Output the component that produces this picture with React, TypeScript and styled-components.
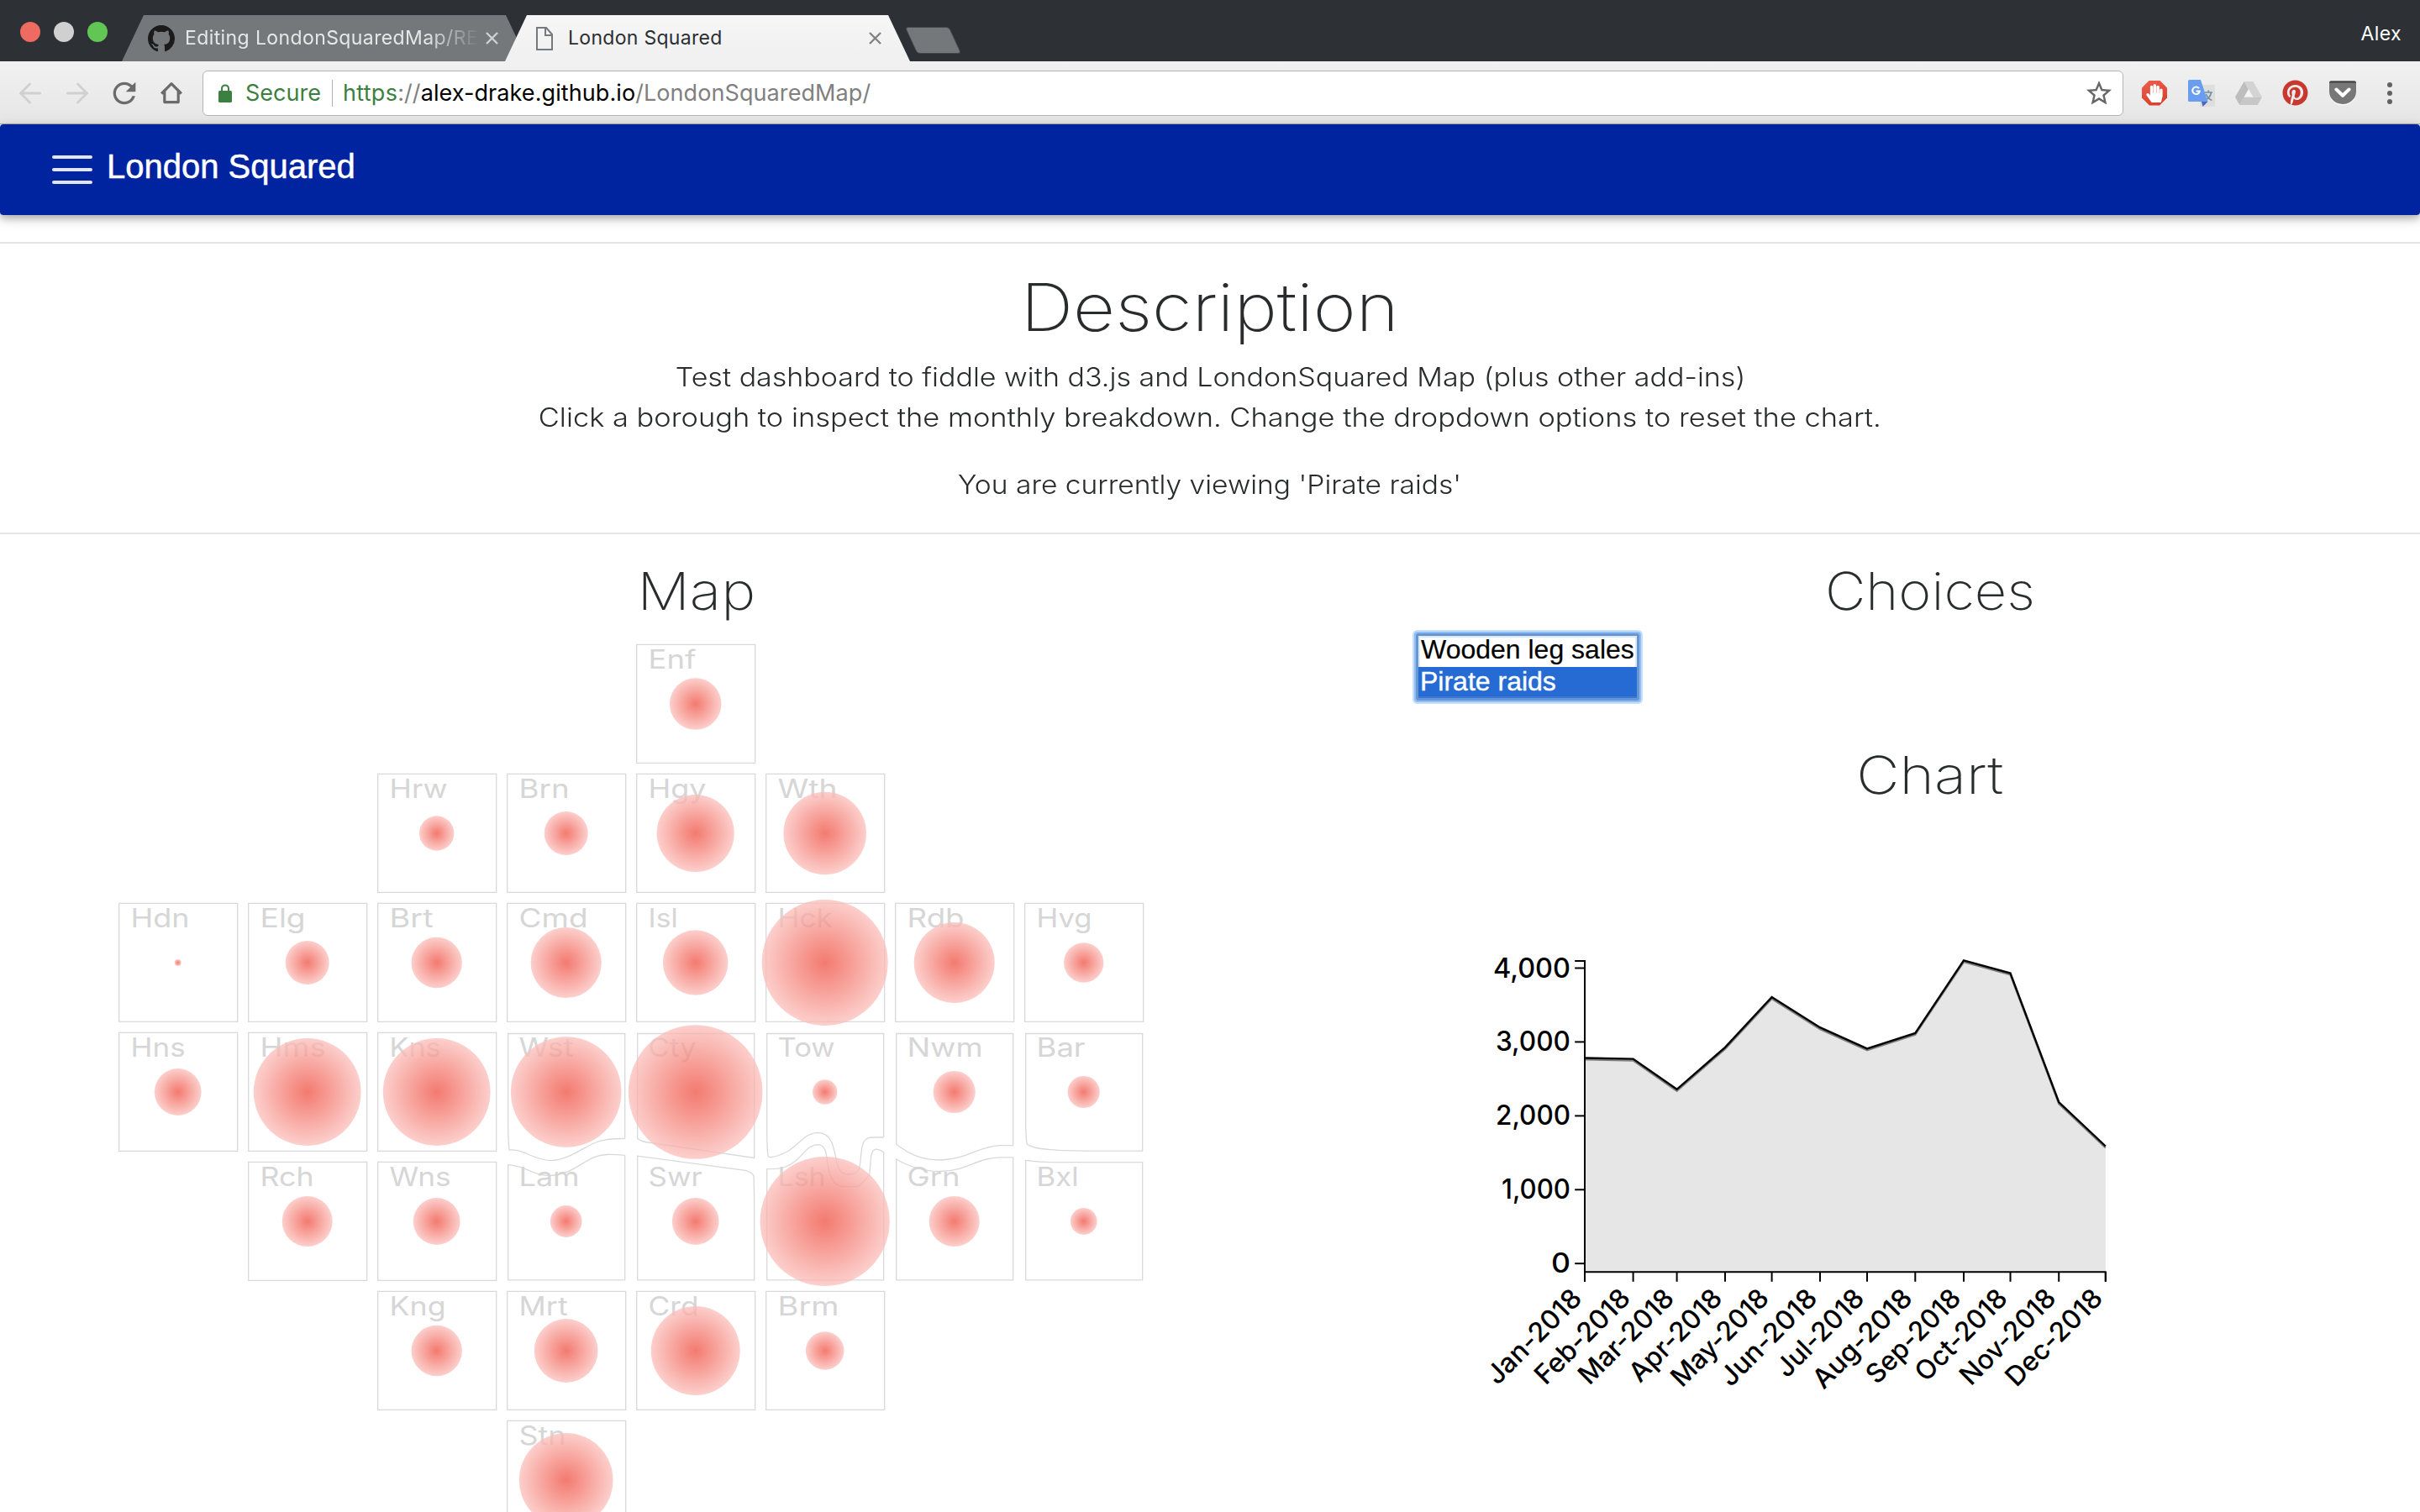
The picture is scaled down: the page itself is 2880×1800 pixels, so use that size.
import React from "react";
import styled, { createGlobalStyle } from "styled-components";
import { FaPinterest, FaHandPaper } from "react-icons/fa";
import { MdRefresh, MdStarBorder } from "react-icons/md";

const GlobalStyle = createGlobalStyle`
  * { box-sizing: border-box; }
  html, body { margin: 0; padding: 0; }
  body { background: #fff; font-family: Inter, "Open Sans", sans-serif; color: #292b2c; }
  svg { display: block; flex: none; }
`;

const Screen = styled.div`
  width: 2880px;
  height: 1800px;
  overflow: hidden;
  display: flex;
  flex-direction: column;
`;

/* ---------- browser window ---------- */

const TabStrip = styled.div`
  flex: none;
  height: 73px;
  padding-left: 24px;
  background: #2d3135;
  display: flex;
  align-items: flex-end;
`;

const Lights = styled.div`
  display: flex;
  gap: 16px;
  margin: 0 17px 23px 0;
`;

const Light = styled.span<{ $color: string }>`
  width: 24px;
  height: 24px;
  border-radius: 50%;
  background: ${(p) => p.$color};
`;

const Tab = styled.div<{ $active?: boolean }>`
  width: ${(p) => (p.$active ? "482px" : "483px")};
  height: 55px;
  margin-left: ${(p) => (p.$active ? "-27px" : "0")};
  padding: ${(p) => (p.$active ? "0 34px 0 37px" : "0 35px 0 31px")};
  display: flex;
  align-items: center;
  clip-path: polygon(26px 0, calc(100% - 26px) 0, 100% 100%, 0 100%);
  background: ${(p) => (p.$active ? "linear-gradient(#f6f6f6, #f0f0f0)" : "#74787b")};
  color: ${(p) => (p.$active ? "#2b2e31" : "#e6e7e7")};
`;

const TabTitle = styled.span<{ $fade?: boolean }>`
  flex: 1;
  margin-left: ${(p) => (p.$fade ? "12px" : "18px")};
  white-space: nowrap;
  font-size: 23px;
  line-height: 55px;
  letter-spacing: ${(p) => (p.$fade ? "0.4px" : "0.3px")};
  ${(p) => p.$fade && "mask-image: linear-gradient(90deg, #000 80%, transparent 98%);"}
`;

const NewTab = styled.div`
  width: 51px;
  height: 30px;
  margin: 0 0 10px 2px;
  border-radius: 3px;
  background: #74787b;
  box-shadow: 0 0 0 1px #44484b;
  transform: skewX(24.8deg);
`;

const Profile = styled.span`
  margin: 0 22px 0 auto;
  padding-bottom: 17px;
  font-size: 23px;
  line-height: 31px;
  letter-spacing: 0.4px;
  color: #fff;
`;

const Toolbar = styled.div`
  flex: none;
  height: 75px;
  padding: 1px 33px 0 23px;
  display: flex;
  align-items: center;
  background: linear-gradient(#f1f1f1, #e6e6e6);
  border-bottom: 1px solid #a9a9a9;
`;

const NavButtons = styled.div`
  display: flex;
  align-items: center;
  gap: 30px;
  margin-right: 24px;
`;

const Omnibox = styled.div`
  flex: 1;
  height: 54px;
  padding: 0 10px 0 18px;
  display: flex;
  align-items: center;
  background: #fff;
  border: 1px solid #b4b4b4;
  border-radius: 6px;
  font-size: 27px;
  line-height: 52px;
`;

const Secure = styled.span`
  margin-left: 16px;
  padding-right: 13px;
  color: #3b7f41;
`;

const Divider = styled.span`
  width: 1px;
  height: 32px;
  background: #b0b0b0;
  margin-right: 12px;
`;

const Url = styled.span`
  flex: 1;
  white-space: nowrap;
  color: #808080;
  letter-spacing: 0.08px;
  b { font-weight: 400; color: #000; }
  i { font-style: normal; color: #3b7f41; letter-spacing: 0.3px; }
`;

const Extensions = styled.div`
  display: flex;
  align-items: center;
  gap: 24px;
  margin-left: 22px;
  color: #c8382f;
`;

const MenuDots = styled.div`
  display: flex;
  flex-direction: column;
  gap: 4px;
  margin-left: 37px;
`;

const Dot = styled.span`
  width: 6px;
  height: 6px;
  border-radius: 50%;
  background: #626262;
`;

const BlockBadge = styled.span`
  width: 30px;
  height: 30px;
  margin-right: 1px;
  display: flex;
  align-items: center;
  justify-content: center;
  color: #fff;
  background: linear-gradient(160deg, #ee5f4c, #d63a28);
  clip-path: polygon(30% 0, 70% 0, 100% 30%, 100% 70%, 70% 100%, 30% 100%, 0 70%, 0 30%);
`;

/* ---------- page ---------- */

const NavBar = styled.header`
  flex: none;
  height: 108px;
  padding: 0 62px 8px;
  display: flex;
  align-items: center;
  gap: 17px;
  background: #0023a0;
  border-radius: 4px;
  box-shadow: 0 4px 10px 0 rgba(0, 0, 0, 0.28), 0 4px 20px 0 rgba(0, 0, 0, 0.1);
  color: #fff;
  font: 400 40px/50px "Liberation Sans", Arial, sans-serif;
  -webkit-text-stroke: 0.5px #fff;
`;

const Burger = styled.div`
  width: 48px;
  padding-top: 8px;
  display: flex;
  flex-direction: column;
  gap: 11px;
`;

const BurgerLine = styled.span`
  height: 4px;
  border-radius: 2px;
  background: #e1e5f4;
`;

const Intro = styled.section`
  flex: none;
  margin-top: 32px;
  height: 348px;
  padding-top: 28px;
  border-top: 2px solid #e5e5e5;
  border-bottom: 2px solid #e5e5e5;
  display: flex;
  flex-direction: column;
  align-items: center;
`;

const Heading = styled.h1<{ $stretch: number }>`
  margin: 0 0 11px;
  font-weight: 230;
  font-size: 78px;
  line-height: 96px;
  transform: scaleX(${(p) => p.$stretch});
`;

const Subheading = styled.h2<{ $stretch: number }>`
  margin: 0;
  padding-right: 2px;
  text-align: center;
  font-weight: 230;
  font-size: 62px;
  line-height: 77px;
  transform: scaleX(${(p) => p.$stretch});
`;

const Copy = styled.p<{ $stretch: number; $gap?: boolean }>`
  margin: ${(p) => (p.$gap ? "32px" : "0")} 0 0;
  font-weight: 300;
  font-size: 31px;
  line-height: 48px;
  white-space: nowrap;
  transform: scaleX(${(p) => p.$stretch});
`;

const Dashboard = styled.main`
  display: grid;
  grid-template-columns: 1660px 1226px;
  column-gap: 25px;
  padding-top: 29px;
`;

const Column = styled.section`
  display: flex;
  flex-direction: column;
`;

const ListBox = styled.div`
  width: 266px;
  margin: 12px 0 50px;
  border: 3px solid #6797d3;
  border-radius: 2px;
  box-shadow: 0 0 0 2px #8fbdf6, 0 0 0 4px #c8dffb;
  font: 400 32px/32px "Liberation Sans", Arial, sans-serif;
`;

const Option = styled.div<{ $selected?: boolean }>`
  padding: ${(p) => (p.$selected ? "1px 0 4px 2px" : "0 0 5px 3px")};
  white-space: nowrap;
  color: ${(p) => (p.$selected ? "#fff" : "#000")};
  background: ${(p) => (p.$selected ? "#266bd3" : "#fff")};
  box-shadow: ${(p) =>
    p.$selected ? "inset 0 -2px 0 #3a78d6" : "inset 2px 2px 0 #dbe9fb, inset -2px 0 0 #dbe9fb"};
  -webkit-text-stroke: ${(p) => (p.$selected ? "0.4px #fff" : "0.2px #000")};
`;

const Cell = styled.path`
  fill: none;
  stroke: #d9d9d9;
  stroke-width: 1.3;
`;

const CellLabel = styled.text`
  fill: #d6d6d6;
  font: 400 31px Inter, sans-serif;
`;

const AxisText = styled.text`
  fill: #000;
  font: 460 32px Inter, sans-serif;
`;

const Axis = styled.path`
  fill: none;
  stroke: #000;
  stroke-width: 2;
`;

/* label, column, row, bubble radius, label width */
type Borough = [string, number, number, number, number];

const boroughs: Borough[] = [
  ["Enf", 4, 0, 30.8, 53],
  ["Hrw", 2, 1, 20.7, 65],
  ["Brn", 3, 1, 26, 56],
  ["Hgy", 4, 1, 46.1, 65],
  ["Wth", 5, 1, 49.3, 67],
  ["Hdn", 0, 2, 4, 66],
  ["Elg", 1, 2, 26, 50],
  ["Brt", 2, 2, 30.2, 48],
  ["Cmd", 3, 2, 42.1, 78],
  ["Isl", 4, 2, 38.8, 31],
  ["Hck", 5, 2, 75, 61],
  ["Rdb", 6, 2, 48, 64],
  ["Hvg", 7, 2, 23.7, 62],
  ["Hns", 0, 3, 27.9, 61],
  ["Hms", 1, 3, 63.9, 74],
  ["Kns", 2, 3, 63.9, 57],
  ["Wst", 3, 3, 65.8, 61],
  ["Cty", 4, 3, 79.8, 53],
  ["Tow", 5, 3, 14.7, 64],
  ["Nwm", 6, 3, 25.1, 86],
  ["Bar", 7, 3, 19.1, 54],
  ["Rch", 1, 4, 30, 60],
  ["Wns", 2, 4, 27.9, 69],
  ["Lam", 3, 4, 18.9, 68],
  ["Swr", 4, 4, 27.9, 60],
  ["Lsh", 5, 4, 77.1, 53],
  ["Grn", 6, 4, 30, 59],
  ["Bxl", 7, 4, 15.9, 46],
  ["Kng", 2, 5, 30.2, 63],
  ["Mrt", 3, 5, 37.9, 54],
  ["Crd", 4, 5, 53, 56],
  ["Brm", 5, 5, 22.8, 69],
  ["Stn", 3, 6, 55.9, 52],
];

/* cells whose edge follows the river */
const riverside: Record<string, string> = {
  Wst: "M743.7 1355.3V1230.5H604.7V1340Q604.9 1360 606 1369C622 1367 636 1381.5 655.5 1381.7C676 1381 694 1366 708 1360.5C718 1356 728 1356 743.7 1355.3",
  Cty: "M758.7 1356V1230.5H897.7V1378.5L768 1359.5Q763 1358.5 758.7 1355.5",
  Tow: "M1051.7 1354V1230.5H912.7V1350Q913 1370 914 1376Q914.5 1378 918 1377.6C950 1372 953 1348.3 974 1348.3C989 1349 992 1364 995 1380C998 1394 1001 1398 1011 1398C1021 1398 1023.5 1393 1024.5 1377C1026 1358 1029 1354 1039 1354H1051.7",
  Nwm: "M1205.7 1363.7V1230.5H1066.7V1362.3C1083 1375 1098 1381 1119 1381C1150 1380 1164 1365 1190 1363.7Z",
  Bar: "M1359.7 1370V1230.5H1220.7V1340Q1221 1354 1222 1361.5C1228 1369 1262 1370 1305 1370.2Z",
  Lam: "M743.7 1375.3V1523.8H604.7V1386.7C628 1388 632 1399.3 655 1399.5C686 1398 698 1374.7 722 1374.5Q734 1374.3 743.7 1375.3",
  Swr: "M758.7 1523.8V1376.2L887 1393.4Q896 1396 897 1400Q897.7 1420 897.7 1440V1523.8Z",
  Lsh: "M912.7 1523.8V1391.7Q928 1391.6 934 1389.5C956 1381 957 1362.7 974 1362.7C982 1363.5 983.5 1372 985 1385C987 1402 993 1412.5 1004 1412.7H1018C1026 1412 1030 1403 1034.5 1399C1036 1392 1035.5 1383 1037 1375Q1039 1367.5 1043.5 1368.2Q1048 1369 1051.7 1371.7V1523.8Z",
  Grn: "M1066.7 1523.8V1380C1082 1389 1098 1394.5 1119 1394.5C1150 1394 1164 1378 1190 1377.8H1205.7V1523.8Z",
  Bxl: "M1220.7 1523.8V1381.3Q1236 1383.6 1262 1383.6H1359.7V1523.8Z",
};

const PITCH = 154;

const BoroughMap = () => (
  <svg width="1660" height="1059" viewBox="0 742 1660 1059">
    <defs>
      <radialGradient id="bubble">
        <stop offset="0" stopColor="#ef4e40" />
        <stop offset="1" stopColor="#fbbfbb" />
      </radialGradient>
    </defs>
    {boroughs.map(([name, col, row, , width]) => (
      <g key={name}>
        <Cell d={riverside[name] ?? `M${141.7 + PITCH * col} ${767.4 + PITCH * row}h141v141h-141z`} />
        <CellLabel x={155.6 + PITCH * col} y={796 + PITCH * row} textLength={width + 4} lengthAdjust="spacingAndGlyphs">
          {name}
        </CellLabel>
      </g>
    ))}
    {boroughs.map(([name, col, row, r]) => (
      <circle key={name} cx={211.7 + PITCH * col} cy={838 + PITCH * row} r={r} fill="url(#bubble)" opacity="0.75" />
    ))}
  </svg>
);

/* label, axis x, line y, label length */
const months: [string, number, number, number][] = [
  ["Jan-2018", 1886, 1259.5, 145],
  ["Feb-2018", 1943.6, 1260.6, 145],
  ["Mar-2018", 1995.6, 1296.8, 145],
  ["Apr-2018", 2053, 1246.9, 141],
  ["May-2018", 2108.6, 1187, 149],
  ["Jun-2018", 2166, 1223.2, 148],
  ["Jul-2018", 2222, 1248.4, 133],
  ["Aug-2018", 2279.3, 1229.9, 152],
  ["Sep-2018", 2337, 1143.3, 144],
  ["Oct-2018", 2392.5, 1158.5, 140],
  ["Nov-2018", 2450.2, 1312, 146],
  ["Dec-2018", 2505.8, 1364.5, 148],
];

/* label, tick y, label length */
const levels: [string, number, number][] = [
  ["4,000", 1152.5, 92],
  ["3,000", 1240.4, 89],
  ["2,000", 1328.4, 89],
  ["1,000", 1416.3, 82],
  ["0", 1504.2, 23],
];

const points = months.map(([, x, y]) => `${x},${y}`).join(" ");

const AreaChart = () => (
  <svg width="1226" height="839" viewBox="1685 961 1226 839">
    <polygon points={`1886,1514 ${points} 2505.8,1514`} fill="#e6e6e6" />
    <polyline points={points} transform="translate(0 2)" fill="none" stroke="#808080" strokeWidth="2.2" />
    <polyline points={points} fill="none" stroke="#000" strokeWidth="2.4" />
    <Axis d="M1874.2 1144H1886V1514.3" />
    <Axis d="M1886 1525.8V1514.3H2505.8V1525.8" />
    {levels.map(([label, y, length]) => (
      <g key={label}>
        <Axis d={`M1874.2 ${y}H1886`} />
        <AxisText x="1869" y={y + 11} textAnchor="end" textLength={length} lengthAdjust="spacingAndGlyphs">
          {label}
        </AxisText>
      </g>
    ))}
    {months.map(([label, x, , length]) => (
      <g key={label}>
        <Axis d={`M${x} 1514.3V1525.8`} />
        <AxisText
          transform={`translate(${x - 1.5} 1547.5) rotate(-45)`}
          textAnchor="end"
          textLength={length}
          lengthAdjust="spacingAndGlyphs"
        >
          {label}
        </AxisText>
      </g>
    ))}
  </svg>
);

const CloseIcon = ({ color }: { color: string }) => (
  <svg width="15" height="15" viewBox="0 0 15 15" fill="none" stroke={color} strokeWidth="2.4">
    <path d="M1 1l13 13M14 1L1 14" />
  </svg>
);

const OctocatIcon = () => (
  <svg width="32" height="32" viewBox="0 0 16 16" fill="#1b1b1c">
    <path d="M8 0C3.58 0 0 3.58 0 8c0 3.54 2.29 6.53 5.47 7.59.4.07.55-.17.55-.38 0-.19-.01-.82-.01-1.49-2.01.37-2.53-.49-2.69-.94-.09-.23-.48-.94-.82-1.13-.28-.15-.68-.52-.01-.53.63-.01 1.08.58 1.23.82.72 1.21 1.87.87 2.33.66.07-.52.28-.87.51-1.07-1.78-.2-3.64-.89-3.64-3.95 0-.87.31-1.59.82-2.15-.08-.2-.36-1.02.08-2.12 0 0 .67-.21 2.2.82.64-.18 1.32-.27 2-.27.68 0 1.36.09 2 .27 1.53-1.04 2.2-.82 2.2-.82.44 1.1.16 1.92.08 2.12.51.56.82 1.27.82 2.15 0 3.07-1.87 3.75-3.65 3.95.29.25.54.73.54 1.48 0 1.07-.01 1.93-.01 2.2 0 .21.15.46.55.38A8.01 8.01 0 0 0 16 8c0-4.42-3.58-8-8-8z" />
  </svg>
);

const PageIcon = () => (
  <svg width="20" height="28" viewBox="0 0 20 28" fill="none" stroke="#75797c" strokeWidth="2">
    <path d="M1 1h11l7 8v18H1zM11 1v9h8" />
  </svg>
);

const ArrowIcon = ({ flip }: { flip?: boolean }) => (
  <svg width="26" height="26" viewBox="0 0 26 26" fill="none" stroke="#d0d0d0" strokeWidth="2.8" strokeLinecap="round">
    <path d={flip ? "M1 13h23M13.5 2L24.5 13l-11 11" : "M25 13H2M12.5 2L1.5 13l11 11"} />
  </svg>
);

const HomeIcon = () => (
  <svg width="26" height="27" viewBox="0 0 26 27" fill="none" stroke="#6b6b6b" strokeWidth="3.2">
    <path d="M1.2 14.5L13 2.6l11.8 11.9M4.8 12v12.6h16.4V12" strokeLinejoin="round" />
  </svg>
);

const ReloadIcon = styled(MdRefresh)`
  width: 40px;
  height: 40px;
  margin: 0 -7px;
  color: #6b6b6b;
`;

const StarIcon = styled(MdStarBorder)`
  width: 36px;
  height: 36px;
  color: #666;
`;

const PinterestIcon = styled(FaPinterest)`
  width: 31px;
  height: 31px;
  margin-right: 1px;
`;

const LockIcon = () => (
  <svg width="16" height="22" viewBox="0 0 16 22">
    <rect x="0" y="8" width="16" height="14" rx="1.5" fill="#3b7f41" />
    <path d="M4 9V5.4a4 4 0 0 1 8 0V9" fill="none" stroke="#3b7f41" strokeWidth="2" />
  </svg>
);

const TranslateIcon = () => (
  <svg width="32" height="32" viewBox="0 0 32 32">
    <rect x="14" y="6" width="18" height="26" rx="1.5" fill="#dedede" />
    <path d="M20 15h9M24.3 12.5V15M27.5 15c-.6 4-3.5 7.5-7 9.5M21.5 17c1 3 3.5 6 6.8 7.5" stroke="#7292a1" strokeWidth="1.7" fill="none" />
    <path d="M16 26h7.5L17.5 32z" fill="#4a66bd" />
    <path d="M1.5 0H15l8.5 26h-22A1.5 1.5 0 0 1 0 24.5v-23A1.5 1.5 0 0 1 1.5 0z" fill="#689df0" />
    <path d="M13 10.2A4.3 4.3 0 1 0 13.8 13.5H9.5" fill="none" stroke="#fff" strokeWidth="2" />
  </svg>
);

const DriveIcon = () => (
  <svg width="32" height="28" viewBox="0 0 32 28">
    <path d="M10.7 0L0 18.5 5.3 28 16 9.3z" fill="#bdbdbd" />
    <path d="M10.7 0h10.6L32 18.5H21.3z" fill="#d3d3d3" />
    <path d="M10.7 18.5H32L26.7 28H5.3z" fill="#c7c7c7" />
    <path d="M16 9.3l5.3 9.2H10.7z" fill="#f3f3f3" />
  </svg>
);

const PocketIcon = () => (
  <svg width="32" height="30" viewBox="0 0 32 30">
    <path d="M0 2.5h32V14a16 15.5 0 0 1-32 0z" fill="#fafafa" />
    <path d="M2 .5h28a2 2 0 0 1 2 2V13a16 15 0 0 1-32 0V2.5a2 2 0 0 1 2-2z" fill="#777" />
    <path d="M2 .5h28a2 2 0 0 1 2 2H0a2 2 0 0 1 2-2z" fill="#3f3f3f" />
    <path d="M8.5 10.5l7.5 7.3 7.5-7.3" fill="none" stroke="#fff" strokeWidth="4" strokeLinecap="round" strokeLinejoin="round" />
  </svg>
);

export default function App() {
  return (
    <Screen>
      <GlobalStyle />
      <TabStrip>
        <Lights>
          <Light $color="#ed6b60" />
          <Light $color="#d0d0d0" />
          <Light $color="#62c655" />
        </Lights>
        <Tab>
          <OctocatIcon />
          <TabTitle $fade>Editing LondonSquaredMap/RE</TabTitle>
          <CloseIcon color="#cfd0d1" />
        </Tab>
        <Tab $active>
          <PageIcon />
          <TabTitle>London Squared</TabTitle>
          <CloseIcon color="#808386" />
        </Tab>
        <NewTab />
        <Profile>Alex</Profile>
      </TabStrip>

      <Toolbar>
        <NavButtons>
          <ArrowIcon />
          <ArrowIcon flip />
          <ReloadIcon />
          <HomeIcon />
        </NavButtons>
        <Omnibox>
          <LockIcon />
          <Secure>Secure</Secure>
          <Divider />
          <Url>
            <i>https</i>://<b>alex-drake.github.io</b>/LondonSquaredMap/
          </Url>
          <StarIcon />
        </Omnibox>
        <Extensions>
          <BlockBadge>
            <FaHandPaper size={22} />
          </BlockBadge>
          <TranslateIcon />
          <DriveIcon />
          <PinterestIcon />
          <PocketIcon />
        </Extensions>
        <MenuDots>
          <Dot />
          <Dot />
          <Dot />
        </MenuDots>
      </Toolbar>

      <NavBar>
        <Burger>
          <BurgerLine />
          <BurgerLine />
          <BurgerLine />
        </Burger>
        London Squared
      </NavBar>

      <Intro>
        <Heading $stretch={1.115}>Description</Heading>
        <Copy $stretch={1.097}>Test dashboard to fiddle with d3.js and LondonSquared Map (plus other add-ins)</Copy>
        <Copy $stretch={1.11}>
          Click a borough to inspect the monthly breakdown. Change the dropdown options to reset the chart.
        </Copy>
        <Copy $stretch={1.083} $gap>
          You are currently viewing 'Pirate raids'
        </Copy>
      </Intro>

      <Dashboard>
        <Column>
          <Subheading $stretch={1.12}>Map</Subheading>
          <BoroughMap />
        </Column>
        <Column>
          <Subheading $stretch={1.075}>Choices</Subheading>
          <ListBox>
            <Option>Wooden leg sales</Option>
            <Option $selected>Pirate raids</Option>
          </ListBox>
          <Subheading $stretch={1.14}>Chart</Subheading>
          <AreaChart />
        </Column>
      </Dashboard>
    </Screen>
  );
}
